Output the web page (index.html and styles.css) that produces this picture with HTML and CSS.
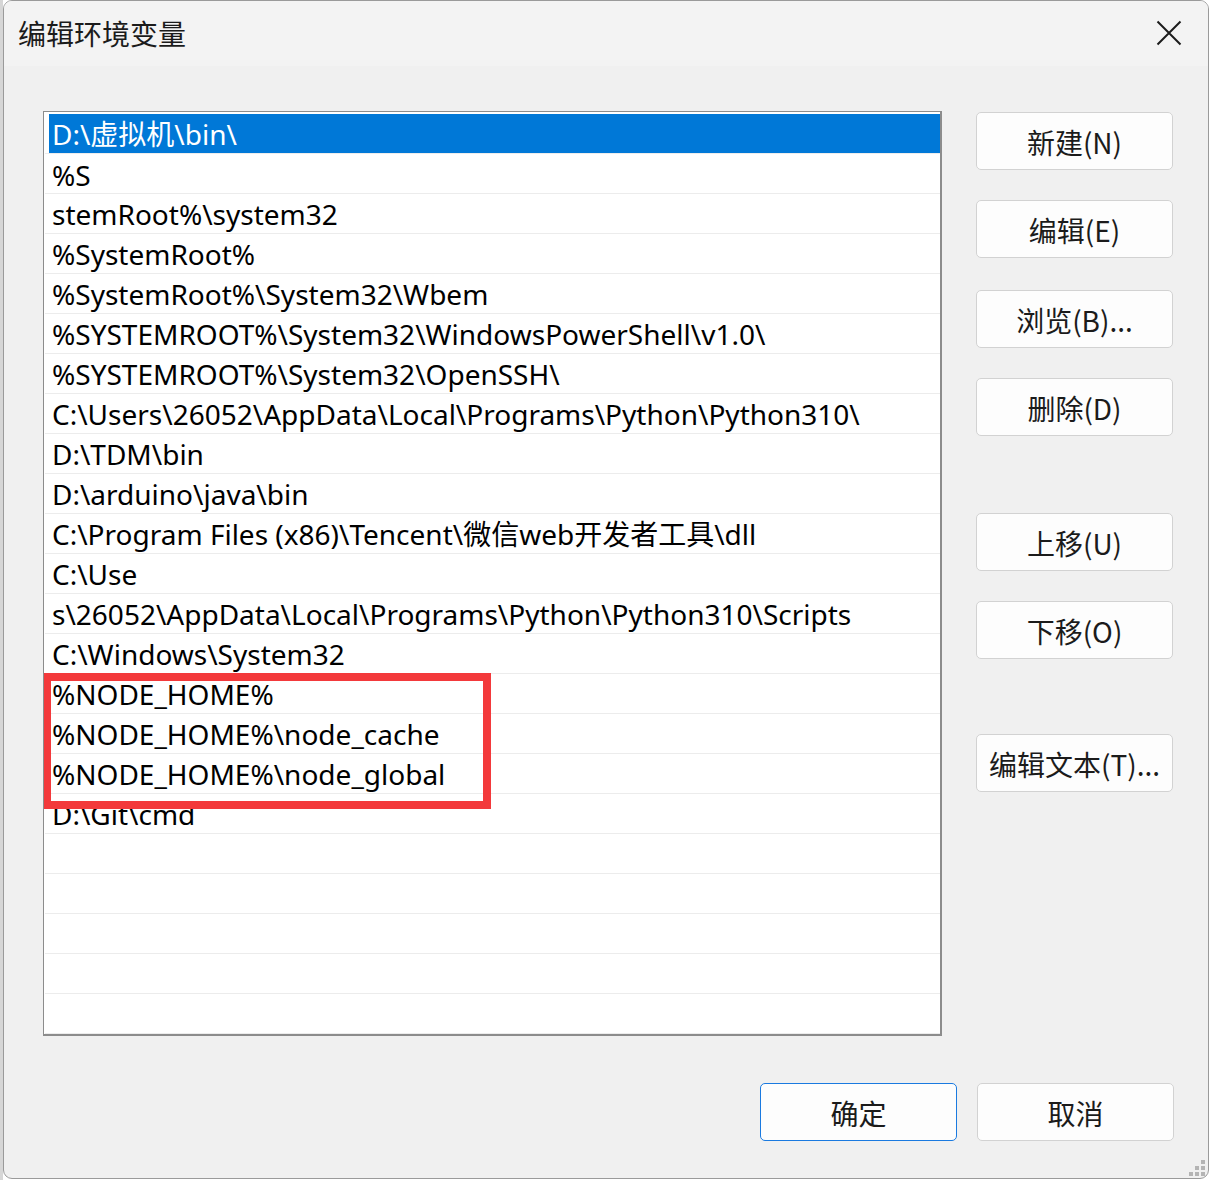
FILE: index.html
```html
<!DOCTYPE html>
<html lang="zh-CN">
<head>
<meta charset="utf-8">
<title>编辑环境变量</title>
<link rel="stylesheet" href="styles.css">
</head>
<body>
<div class="strip"></div>
<div class="window">
  <div class="titlebar">
    <span class="title">编辑环境变量</span>
    <svg class="close" width="26" height="26" viewBox="0 0 26 26"><path d="M1.5 1.5 L24.5 24.5 M24.5 1.5 L1.5 24.5" stroke="#1b1b1b" stroke-width="2" fill="none"/></svg>
  </div>
  <div class="body">
    <div class="main">
      <div class="list">
        <div class="row selected"><span>D:\虚拟机\bin\</span></div>
        <div class="row">%S</div>
        <div class="row">stemRoot%\system32</div>
        <div class="row">%SystemRoot%</div>
        <div class="row">%SystemRoot%\System32\Wbem</div>
        <div class="row">%SYSTEMROOT%\System32\WindowsPowerShell\v1.0\</div>
        <div class="row">%SYSTEMROOT%\System32\OpenSSH\</div>
        <div class="row">C:\Users\26052\AppData\Local\Programs\Python\Python310\</div>
        <div class="row">D:\TDM\bin</div>
        <div class="row">D:\arduino\java\bin</div>
        <div class="row">C:\Program Files (x86)\Tencent\微信web开发者工具\dll</div>
        <div class="row">C:\Use</div>
        <div class="row">s\26052\AppData\Local\Programs\Python\Python310\Scripts</div>
        <div class="row">C:\Windows\System32</div>
        <div class="row">%NODE_HOME%</div>
        <div class="row">%NODE_HOME%\node_cache</div>
        <div class="row">%NODE_HOME%\node_global</div>
        <div class="row">D:\Git\cmd</div>
        <div class="row"></div>
        <div class="row"></div>
        <div class="row"></div>
        <div class="row"></div>
        <div class="row"></div>
        <div class="highlight"></div>
      </div>
      <div class="side">
        <button class="btn">新建(N)</button>
        <button class="btn">编辑(E)</button>
        <button class="btn">浏览(B)...</button>
        <button class="btn">删除(D)</button>
        <button class="btn gap-lg">上移(U)</button>
        <button class="btn">下移(O)</button>
        <button class="btn gap-lg2">编辑文本(T)...</button>
      </div>
    </div>
    <div class="footer">
      <button class="btn primary">确定</button>
      <button class="btn">取消</button>
    </div>
  </div>
  <div class="grip">
    <i class="d1"></i><i class="d2"></i><i class="d3"></i><i class="d4"></i><i class="d5"></i><i class="d6"></i>
  </div>
</div>
</body>
</html>
```

FILE: styles.css
```css
* { box-sizing: border-box; }
html, body {
  margin: 0;
  padding: 0;
  width: 1209px;
  height: 1180px;
  overflow: hidden;
  background: #ffffff;
  font-family: "Noto Sans", "Noto Sans CJK SC", sans-serif;
}
body {
  display: flex;
  position: relative;
}
.strip {
  width: 3px;
  height: 1180px;
  background: #d6d6d6;
  flex: none;
}
.window {
  position: relative;
  width: 1206px;
  height: 1179px;
  border: 1px solid #9a9a9a;
  border-radius: 9px;
  background: #f0f0f0;
  display: flex;
  flex-direction: column;
  overflow: hidden;
}
.titlebar {
  height: 65px;
  background: #f3f3f3;
  display: flex;
  align-items: center;
  justify-content: space-between;
  padding: 0 26px 0 14px;
  flex: none;
}
.title {
  font-family: "Noto Sans CJK SC", sans-serif;
  font-size: 28px;
  color: #1b1b1b;
  margin-top: -2px;
}
.close { display: block; margin-top: -1px; }
.body {
  flex: 1;
  display: flex;
  flex-direction: column;
  padding: 45px 34px 0 39px;
}
.main {
  display: flex;
  gap: 34px;
}
.list {
  position: relative;
  width: 899px;
  height: 925px;
  background: #ffffff;
  border: 1px solid #8c8c8c;
  border-right-width: 2px;
  border-bottom-width: 2px;
  padding: 2px 0 0 1px;
  overflow: hidden;
}
.row {
  height: 40px;
  border-bottom: 1px solid #ececec;
  padding-left: 7px;
  font-size: 28px;
  line-height: 41px;
  color: #000;
  white-space: nowrap;
  font-family: "Noto Sans", "Noto Sans CJK SC", sans-serif;
}
.row.selected {
  padding-left: 4px;
  height: 39px;
  border-bottom: none;
}
.row.selected span {
  display: block;
  height: 39px;
  line-height: 40px;
  background: #0078d7;
  color: #ffffff;
  padding-left: 3px;
}
.row.selected + .row { height: 41px; padding-top: 1px; border-top: 1px solid #ececec; }
.highlight {
  position: absolute;
  left: -1px;
  top: 561px;
  width: 448px;
  height: 136px;
  border: 8px solid #f3393b;
  pointer-events: none;
}
.side {
  display: flex;
  flex-direction: column;
  gap: 30px;
  padding-top: 1px;
}
.btn {
  width: 197px;
  height: 58px;
  background: #fdfdfd;
  border: 1px solid #d2d2d2;
  border-radius: 5px;
  font-family: "Noto Sans CJK SC", sans-serif;
  font-size: 28px;
  color: #1b1b1b;
  padding: 2px 0 0;
  flex: none;
}
.side .btn:nth-child(3) { margin-top: 2px; }
.gap-lg { margin-top: 47px; }
.gap-lg2 { margin-top: 45px; }
.footer {
  display: flex;
  justify-content: flex-end;
  gap: 20px;
  margin-top: 47px;
}
.btn.primary {
  border: 1.5px solid #1a7ae0;
}
.grip {
  position: absolute;
  right: 3px;
  bottom: 2px;
  width: 18px;
  height: 16px;
}
.grip i {
  position: absolute;
  width: 4px;
  height: 4px;
  background: #b4b4b4;
}
.grip .d1 { right: 0; top: 0; }
.grip .d2 { right: 0; top: 6px; }
.grip .d3 { right: 6px; top: 6px; }
.grip .d4 { right: 0; top: 12px; }
.grip .d5 { right: 6px; top: 12px; }
.grip .d6 { right: 12px; top: 12px; }
```
